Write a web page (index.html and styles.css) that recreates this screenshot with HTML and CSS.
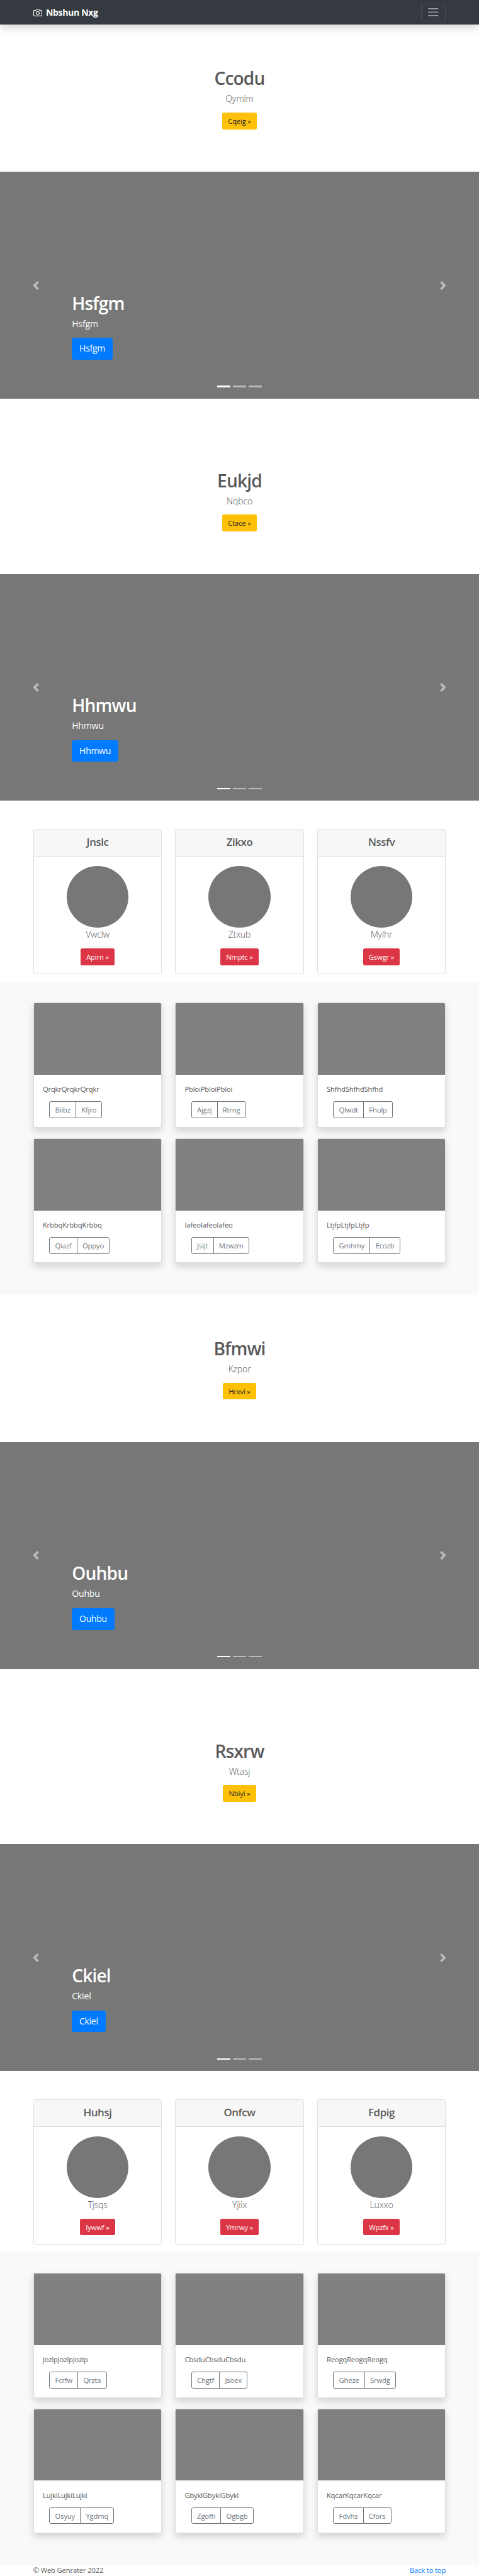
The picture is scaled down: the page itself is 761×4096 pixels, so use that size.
FILE: index.html
```html
<!DOCTYPE html>
<html lang="en">
<head>
<meta charset="utf-8">
<title>Nbshun Nxg</title>
<link rel="stylesheet" href="styles.css">
</head>
<body>
<header class="navbar">
  <a class="brand"><svg class="brand-icon" viewBox="0 0 24 24" fill="none" stroke="currentColor" stroke-width="2" stroke-linecap="round" stroke-linejoin="round"><path d="M23 19a2 2 0 0 1-2 2H3a2 2 0 0 1-2-2V8a2 2 0 0 1 2-2h4l2-3h6l2 3h4a2 2 0 0 1 2 2z"/><circle cx="12" cy="13" r="4"/></svg><span>Nbshun Nxg</span></a>
  <button class="toggler"><svg viewBox="0 0 30 30" stroke="rgba(255,255,255,.5)" stroke-width="2" stroke-linecap="round"><path d="M4 7h22M4 15h22M4 23h22"/></svg></button>
</header>
<main id="page"></main>
<footer class="footer"><span>© Web Genrater 2022</span><a class="link">Back to top</a></footer>
<script src="page.js"></script>
</body>
</html>
```
FILE: page.js
```js
const hero = (title, sub, btn) => `
<section class="hero"><h1 class="title">${title}</h1><p class="lead">${sub}</p><a class="btn btn-warning">${btn} »</a></section>`;

const carousel = (t) => `
<section class="carousel">
  <svg class="arrow" viewBox="0 0 8 8"><path d="M5.25 0l-4 4 4 4 1.5-1.5-2.5-2.5 2.5-2.5-1.5-1.5z"/></svg>
  <svg class="arrow arrow-next" viewBox="0 0 8 8"><path d="M2.75 0l-1.5 1.5 2.5 2.5-2.5 2.5 1.5 1.5 4-4-4-4z"/></svg>
  <div class="caption"><h1 class="title">${t}</h1><p class="caption-text">${t}</p><a class="btn btn-primary">${t}</a></div>
  <div class="indicators"><i class="dot active"></i><i class="dot"></i><i class="dot"></i></div>
</section>`;

const pricing = (items) => `
<section class="deck">${items.map(([h, s, b]) => `
  <article class="plan"><h4 class="plan-head">${h}</h4><div class="plan-body"><div class="circle"></div><p class="lead">${s}</p><a class="btn btn-danger">${b} »</a></div></article>`).join("")}
</section>`;

const album = (items) => `
<section class="album">${items.map(([t, a, b]) => `
  <article class="photo"><div class="thumb"></div><div class="photo-body"><p class="photo-text">${t.repeat(3)}</p><div class="group"><a class="btn btn-outline">${a}</a><a class="btn btn-outline">${b}</a></div></div></article>`).join("")}
</section>`;

document.getElementById("page").innerHTML =
  hero("Ccodu", "Qymlm", "Cqeig") + carousel("Hsfgm") +
  hero("Eukjd", "Nqbco", "Ctace") + carousel("Hhmwu") +
  pricing([["Jnslc", "Vwclw", "Apirn"], ["Zikxo", "Ztxub", "Nmptc"], ["Nssfv", "Mylhr", "Gswgr"]]) +
  album([["Qrqkr", "Biibz", "Kfjro"], ["Pbloi", "Ajgzj", "Rtrng"], ["Shfhd", "Qlwdt", "Fhulp"],
         ["Krbbq", "Qiazf", "Oppyo"], ["Iafeo", "Jsijt", "Mzwzm"], ["Ltjfp", "Gmhmy", "Ecozb"]]) +
  hero("Bfmwi", "Kzpor", "Hrxvi") + carousel("Ouhbu") +
  hero("Rsxrw", "Wtasj", "Nbiyi") + carousel("Ckiel") +
  pricing([["Huhsj", "Tjsqs", "Iywwf"], ["Onfcw", "Yjiix", "Ymrwy"], ["Fdpig", "Luxxo", "Wpzfx"]]) +
  album([["Jozlp", "Fcrfw", "Qrzta"], ["Cbsdu", "Chgtf", "Jsoex"], ["Reogq", "Gheze", "Srwdg"],
         ["Lujki", "Osyuy", "Ygdmq"], ["Gbykl", "Zgofh", "Ogbgb"], ["Kqcar", "Fdvhs", "Cfors"]]);
```
FILE: styles.css
```css
/* --u is one design pixel; the layout is drawn on a 1080-wide grid */
:root { --u: .70426px; }
* { box-sizing: border-box; }
body {
  margin: 0;
  background: #fff;
  color: #5a5a5a;
  font: calc(16 * var(--u))/1.5 "Open Sans", "Noto Sans", sans-serif;
  letter-spacing: -.015em;
}
h1, h4, p { margin: 0; }
svg { display: block; }

.navbar {
  position: relative;
  z-index: 1;
  display: flex;
  align-items: center;
  justify-content: space-between;
  height: calc(56 * var(--u));
  padding: 0 calc(75 * var(--u));
  background: #343a40;
  box-shadow: 0 calc(8 * var(--u)) calc(16 * var(--u)) rgba(0,0,0,.15);
}
.brand {
  display: flex;
  align-items: center;
  gap: calc(8.5 * var(--u));
  color: #fff;
  font-size: calc(20 * var(--u));
  font-weight: 700;
  letter-spacing: -.025em;
}
.brand-icon { width: calc(20 * var(--u)); height: calc(20 * var(--u)); stroke-width: 1.8; }
.toggler {
  width: calc(56 * var(--u));
  height: calc(40 * var(--u));
  padding: 0 calc(12 * var(--u));
  background: none;
  border: 1px solid rgba(255,255,255,.1);
  border-radius: calc(4 * var(--u));
}

.hero {
  display: flex;
  flex-direction: column;
  align-items: center;
  height: calc(332 * var(--u));
  padding-top: calc(96 * var(--u));
}
.carousel + .hero, .carousel + .deck { margin-top: calc(64 * var(--u)); }
.title {
  height: calc(56 * var(--u));
  padding-top: calc(2 * var(--u));
  font-size: calc(40 * var(--u));
  font-weight: 600;
  letter-spacing: -.03em;
  line-height: calc(48 * var(--u));
}
.lead {
  height: calc(46 * var(--u));
  font-size: calc(20 * var(--u));
  font-weight: 300;
  line-height: calc(32 * var(--u));
}
.btn {
  display: inline-block;
  height: calc(38 * var(--u));
  padding: 0 calc(13 * var(--u));
  border-radius: calc(4 * var(--u));
  line-height: calc(38.5 * var(--u));
  white-space: nowrap;
}
.btn-warning { background: #ffc107; color: #212529; }
.btn-danger { background: #dc3545; color: #fff; }
.btn-primary {
  height: calc(48 * var(--u));
  padding: 0 calc(17 * var(--u));
  background: #007bff;
  border-radius: calc(5 * var(--u));
  font-size: calc(20 * var(--u));
  letter-spacing: -.025em;
  line-height: calc(49 * var(--u));
}

.carousel {
  position: relative;
  display: flex;
  flex-direction: column;
  justify-content: flex-end;
  height: calc(512 * var(--u));
  background: #777;
  color: #fff;
}
.caption { padding: 0 15% calc(59 * var(--u)); }
.caption .btn { display: table; }
.caption-text {
  height: calc(48 * var(--u));
  font-size: calc(20 * var(--u));
  line-height: calc(30.5 * var(--u));
}
.indicators {
  display: flex;
  justify-content: center;
  gap: calc(6 * var(--u));
  padding-bottom: calc(26 * var(--u));
}
.dot { width: calc(30 * var(--u)); height: calc(3 * var(--u)); background: rgba(255,255,255,.5); }
.dot.active { background: #fff; }
.arrow {
  position: absolute;
  top: 50%;
  left: 7.5%;
  width: calc(20 * var(--u));
  height: calc(20 * var(--u));
  fill: #fff;
  opacity: .5;
  transform: translate(-50%, -50%);
}
.arrow-next { left: 92.5%; }

.deck {
  display: grid;
  grid-template-columns: repeat(3, 1fr);
  gap: calc(30 * var(--u));
  height: calc(344 * var(--u));
  padding: 0 calc(75 * var(--u)) calc(16 * var(--u));
}
.plan {
  border: 1px solid rgba(0,0,0,.125);
  border-radius: calc(4 * var(--u));
  text-align: center;
}
.plan-head {
  height: calc(61.6 * var(--u));
  padding-top: calc(12 * var(--u));
  background: #f7f7f7;
  border-bottom: 1px solid rgba(0,0,0,.125);
  font-size: calc(24 * var(--u));
  font-weight: 600;
  letter-spacing: -.025em;
  line-height: calc(30.5 * var(--u));
}
.plan-body { padding-top: calc(20 * var(--u)); }
.circle {
  width: calc(140 * var(--u));
  height: calc(140 * var(--u));
  margin: 0 auto;
  background: #777;
  border-radius: 50%;
}

.album {
  display: grid;
  grid-template-columns: repeat(3, 1fr);
  grid-auto-rows: calc(282 * var(--u));
  gap: calc(24 * var(--u)) calc(30 * var(--u));
  height: calc(708 * var(--u));
  padding: calc(48 * var(--u)) calc(75 * var(--u)) 0;
  background: #f8f9fa;
}
.photo {
  overflow: hidden;
  background: #fff;
  border: 1px solid rgba(0,0,0,.125);
  border-radius: calc(4 * var(--u));
  box-shadow: 0 calc(8 * var(--u)) calc(16 * var(--u)) rgba(0,0,0,.15);
}
.thumb { height: calc(161.6 * var(--u)); background: gray; }
.photo-body { padding: calc(20 * var(--u)); }
.photo-text { height: calc(40 * var(--u)); line-height: calc(25.5 * var(--u)); }
.group { display: flex; padding-left: calc(15 * var(--u)); }
.btn-outline {
  border: 1px solid #6c757d;
  padding: 0 calc(11.6 * var(--u));
  color: #6c757d;
  line-height: calc(36 * var(--u));
}
.btn-outline:first-child { border-radius: calc(4 * var(--u)) 0 0 calc(4 * var(--u)); }
.btn-outline:last-child { margin-left: -1px; border-radius: 0 calc(4 * var(--u)) calc(4 * var(--u)) 0; }

.footer {
  display: flex;
  justify-content: space-between;
  height: calc(24 * var(--u));
  padding: 0 calc(75 * var(--u));
}
.link { color: #007bff; }
```
